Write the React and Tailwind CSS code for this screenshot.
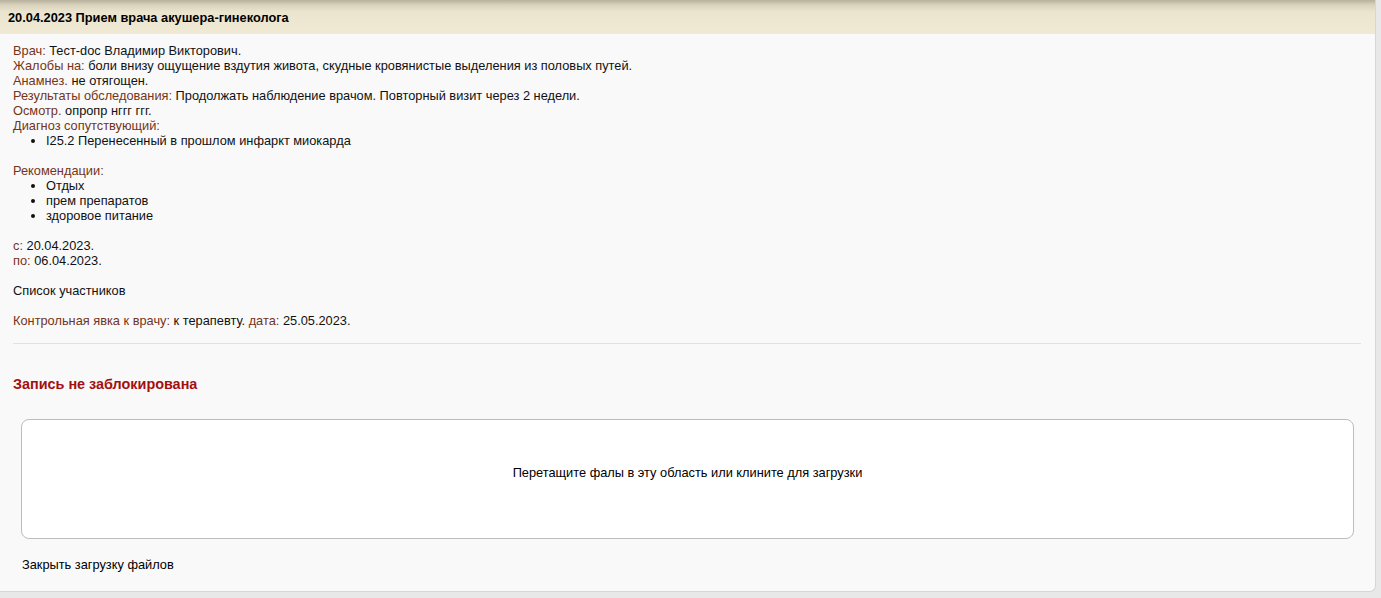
export default function App() {
  const label = "text-[#74351a]";
  return (
    <div className="w-[1381px] h-[598px] bg-[#e8e8e8] overflow-hidden" style={{ fontFamily: '"Liberation Sans", Arial, sans-serif' }}>
      <div className="w-[1376px] h-[592px] bg-[#f9f9f9] rounded-br-[6px] border-r border-b border-[#d6d6d6] flex flex-col text-[12.8px] leading-[15px] text-[#111]">
        <div className="h-[34px] shrink-0 flex items-center px-[8px] font-bold text-[12.8px] text-black bg-[linear-gradient(to_bottom,#b7b09c_0px,#d9d2bc_5px,#ebe4cf_12px,#f0e9d4_34px)]">
          20.04.2023 Прием врача акушера-гинеколога
        </div>
        <div className="pt-[9px] px-[13px]">
          <div><span className={label}>Врач:</span> Тест-doc Владимир Викторович.</div>
          <div><span className={label}>Жалобы на:</span> боли внизу ощущение вздутия живота, скудные кровянистые выделения из половых путей.</div>
          <div><span className={label}>Анамнез.</span> не отягощен.</div>
          <div><span className={label}>Результаты обследования:</span> Продолжать наблюдение врачом. Повторный визит через 2 недели.</div>
          <div><span className={label}>Осмотр.</span> опропр нггг ггг.</div>
          <div className={label}>Диагноз сопутствующий:</div>
          <ul className="list-disc pl-[33px]">
            <li>I25.2 Перенесенный в прошлом инфаркт миокарда</li>
          </ul>
          <div className="h-[15px]" />
          <div className={label}>Рекомендации:</div>
          <ul className="list-disc pl-[33px]">
            <li>Отдых</li>
            <li>прем препаратов</li>
            <li>здоровое питание</li>
          </ul>
          <div className="h-[15px]" />
          <div><span className={label}>с:</span> 20.04.2023.</div>
          <div><span className={label}>по:</span> 06.04.2023.</div>
          <div className="h-[15px]" />
          <div>Список участников</div>
          <div className="h-[15px]" />
          <div><span className={label}>Контрольная явка к врачу:</span> к терапевту. <span className={label}>дата:</span> 25.05.2023.</div>
          <div className="mt-[15px] h-[1px] bg-[#e2e2e2] mr-[1px]" />
          <div className="mt-[32px] text-[14.4px] leading-[16px] font-bold text-[#a3100f]">Запись не заблокирована</div>
          <div className="mt-[27px] mx-[8px] h-[120px] bg-white border border-[#bdbdbd] rounded-[8px] flex items-center justify-center pb-[14px] text-black">
            Перетащите фалы в эту область или клините для загрузки
          </div>
          <div className="mt-[18px] ml-[9px] text-black">Закрыть загрузку файлов</div>
        </div>
      </div>
    </div>
  );
}
